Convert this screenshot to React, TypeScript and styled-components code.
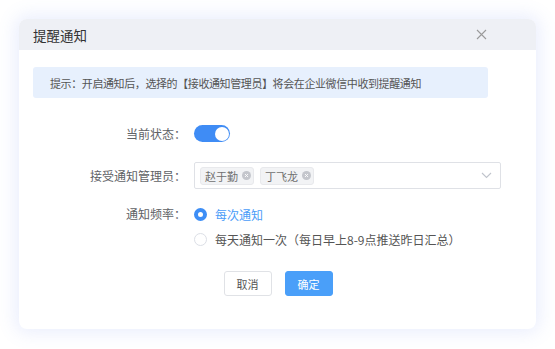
import React, { useState } from "react";
import styled, { createGlobalStyle } from "styled-components";

const GlobalStyle = createGlobalStyle`
  body {
    margin: 0;
    background: #ffffff;
    font-family: "Noto Sans CJK SC", "Noto Sans", sans-serif;
  }
`;

interface Admin {
  id: number;
  name: string;
}

const initialAdmins: Admin[] = [
  { id: 1, name: "赵于勤" },
  { id: 2, name: "丁飞龙" }
];

const App: React.FC = () => {
  const [enabled, setEnabled] = useState(true);
  const [admins, setAdmins] = useState<Admin[]>(initialAdmins);
  const [frequency, setFrequency] = useState("each");

  return (
    <Page>
      <GlobalStyle />
      <Dialog>
        <Header>
          <Title>提醒通知</Title>
          <CloseButton aria-label="close">
            <svg width="11" height="11" viewBox="0 0 11 11">
              <path d="M1 1L10 10M10 1L1 10" stroke="#9a9a9a" strokeWidth="1.1" />
            </svg>
          </CloseButton>
        </Header>

        <Body>
          <Alert>提示：开启通知后，选择的【接收通知管理员】将会在企业微信中收到提醒通知</Alert>

          <Form>
            <Label>当前状态：</Label>
            <Field>
              <Switch $on={enabled} onClick={() => setEnabled(!enabled)}>
                <Knob />
              </Switch>
            </Field>

            <Label>接受通知管理员：</Label>
            <Field>
              <Select>
                {admins.map(admin => (
                  <Tag key={admin.id}>
                    {admin.name}
                    <TagClose
                      onClick={() =>
                        setAdmins(admins.filter(a => a.id !== admin.id))
                      }
                    >
                      <svg width="9" height="9" viewBox="0 0 10 10">
                        <circle cx="5" cy="5" r="5" fill="#c4c6cc" />
                        <path
                          d="M3.3 3.3L6.7 6.7M6.7 3.3L3.3 6.7"
                          stroke="#ffffff"
                          strokeWidth="1"
                        />
                      </svg>
                    </TagClose>
                  </Tag>
                ))}
                <Chevron>
                  <svg width="11" height="7" viewBox="0 0 11 7">
                    <path
                      d="M1 1L5.5 5.5L10 1"
                      stroke="#c0c4cc"
                      strokeWidth="1.1"
                      fill="none"
                    />
                  </svg>
                </Chevron>
              </Select>
            </Field>

            <Label $top>通知频率：</Label>
            <RadioGroup>
              <RadioRow onClick={() => setFrequency("each")}>
                <Radio $checked={frequency === "each"} />
                <RadioText $checked={frequency === "each"}>每次通知</RadioText>
              </RadioRow>
              <RadioRow onClick={() => setFrequency("daily")}>
                <Radio $checked={frequency === "daily"} />
                <RadioText $checked={frequency === "daily"}>
                  每天通知一次（每日早上8-9点推送昨日汇总）
                </RadioText>
              </RadioRow>
            </RadioGroup>
          </Form>

          <Footer>
            <Button>取消</Button>
            <Button $primary>确定</Button>
          </Footer>
        </Body>
      </Dialog>
    </Page>
  );
};

const Page = styled.div`
  padding: 19px;
`;

const Dialog = styled.div`
  width: 517px;
  height: 310px;
  background: #ffffff;
  border-radius: 8px;
  overflow: hidden;
  box-shadow: 0 0 18px 4px rgba(90, 120, 240, 0.13);
`;

const Header = styled.div`
  height: 31px;
  display: flex;
  align-items: center;
  justify-content: space-between;
  padding: 0 49px 0 14px;
  background: #eef0f5;
`;

const Title = styled.div`
  font-size: 13.5px;
  color: #333333;
`;

const CloseButton = styled.div`
  display: flex;
  cursor: pointer;
`;

const Body = styled.div`
  padding: 17px 35px 32px 14px;
`;

const Alert = styled.div`
  width: 455px;
  height: 31px;
  box-sizing: border-box;
  display: flex;
  align-items: center;
  padding-left: 17px;
  background: #e7f0fd;
  border-radius: 3px;
  font-size: 11px;
  letter-spacing: -0.4px;
  color: #555555;
  white-space: nowrap;
`;

const Form = styled.div`
  display: grid;
  grid-template-columns: 153px 1fr;
  column-gap: 8px;
  row-gap: 15px;
  margin-top: 22px;
`;

const Label = styled.div<{ $top?: boolean }>`
  display: flex;
  align-items: ${p => (p.$top ? "flex-start" : "center")};
  justify-content: flex-end;
  height: ${p => (p.$top ? "20px" : "auto")};
  line-height: 20px;
  font-size: 12px;
  color: #606266;
`;

const Field = styled.div`
  display: flex;
  align-items: center;
  min-height: 27px;
`;

const Switch = styled.div<{ $on: boolean }>`
  width: 36px;
  height: 17px;
  border-radius: 9px;
  background: ${p => (p.$on ? "#3f8cf5" : "#dcdfe6")};
  display: flex;
  align-items: center;
  padding: 0 1.5px;
  box-sizing: border-box;
  justify-content: ${p => (p.$on ? "flex-end" : "flex-start")};
  cursor: pointer;
`;

const Knob = styled.div`
  width: 14px;
  height: 14px;
  border-radius: 50%;
  background: #ffffff;
`;

const Select = styled.div`
  width: 307px;
  height: 27px;
  box-sizing: border-box;
  border: 1px solid #dfe1e6;
  border-radius: 2px;
  display: flex;
  align-items: center;
  gap: 6px;
  padding: 0 8px 0 5px;
`;

const Tag = styled.div`
  height: 18px;
  box-sizing: border-box;
  display: flex;
  align-items: center;
  gap: 4px;
  padding: 0 2px 0 4px;
  background: #f2f3f5;
  border: 1px solid #e8e9ec;
  border-radius: 3px;
  font-size: 11px;
  color: #707070;
`;

const TagClose = styled.span`
  display: flex;
  cursor: pointer;
`;

const Chevron = styled.span`
  display: flex;
  margin-left: auto;
`;

const RadioGroup = styled.div`
  display: flex;
  flex-direction: column;
  gap: 5px;
`;

const RadioRow = styled.div`
  display: flex;
  align-items: center;
  gap: 8px;
  height: 20px;
  cursor: pointer;
`;

const Radio = styled.span<{ $checked: boolean }>`
  width: 13px;
  height: 13px;
  box-sizing: border-box;
  border-radius: 50%;
  border: ${p => (p.$checked ? "4px solid #3d8ef6" : "1px solid #dcdfe6")};
  background: #ffffff;
`;

const RadioText = styled.span<{ $checked: boolean }>`
  font-size: 12px;
  color: ${p => (p.$checked ? "#4a9cf8" : "#555555")};
`;

const Footer = styled.div`
  display: flex;
  justify-content: center;
  gap: 13px;
  margin-top: 22px;
  padding-left: 22px;
`;

const Button = styled.button<{ $primary?: boolean }>`
  width: 48px;
  height: 25px;
  border-radius: 3px;
  font-family: "Noto Sans CJK SC", sans-serif;
  font-size: 11px;
  cursor: pointer;
  border: 1px solid ${p => (p.$primary ? "#4a9ff9" : "#e0e2e6")};
  background: ${p => (p.$primary ? "#4a9ff9" : "#ffffff")};
  color: ${p => (p.$primary ? "#ffffff" : "#555555")};
  padding: 0;
`;

export default App;
